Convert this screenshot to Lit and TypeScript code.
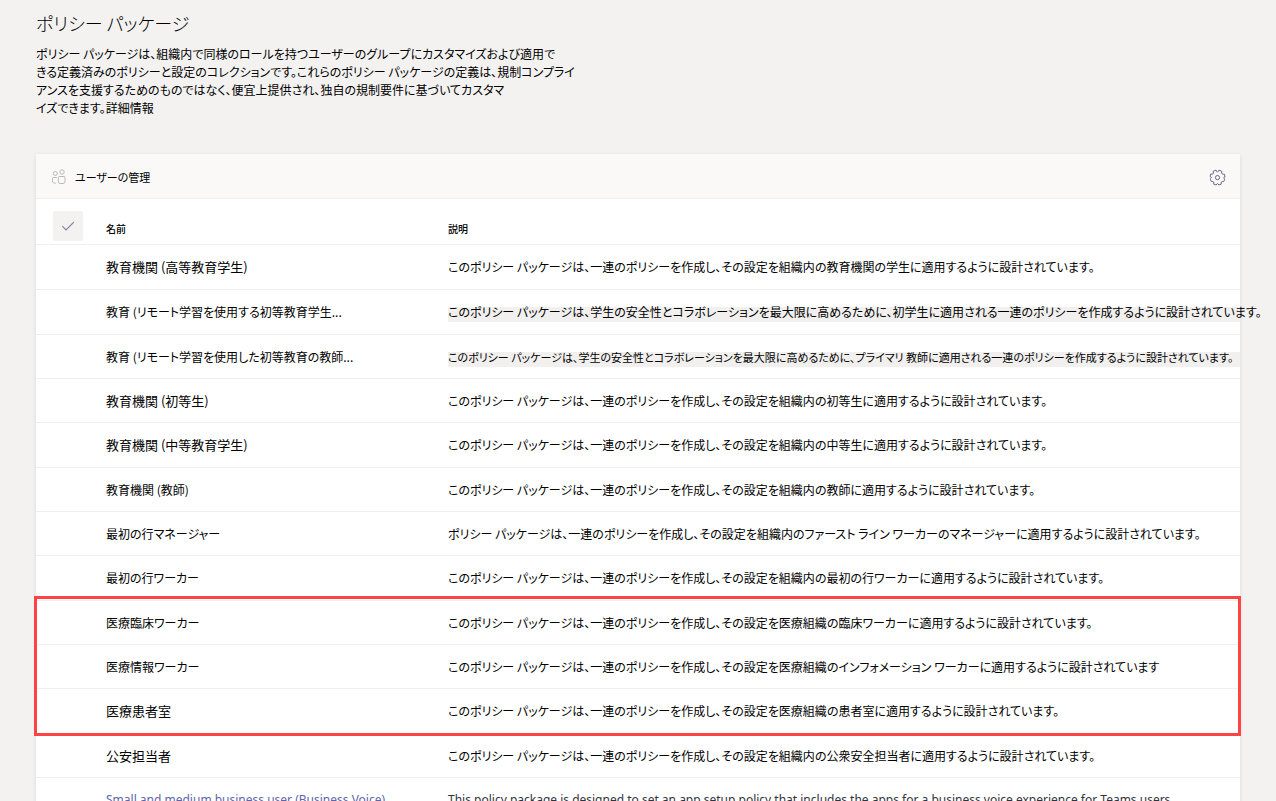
import { LitElement, html, css } from "lit";
import { customElement, state } from "lit/decorators.js";
import { classMap } from "lit/directives/class-map.js";

interface PolicyPackage {
  name: string;
  description: string;
  marked?: boolean;
  compact?: boolean;
  largeName?: boolean;
  link?: boolean;
}

const head = "このポリシー パッケージは、一連のポリシーを作成し、その設定を";
const tail = "に適用するように設計されています。";

const general: PolicyPackage[] = [
  { name: "教育機関 (高等教育学生)", description: head + "組織内の教育機関の学生" + tail, largeName: true },
  {
    name: "教育 (リモート学習を使用する初等教育学生...",
    description:
      "このポリシー パッケージは、学生の安全性とコラボレーションを最大限に高めるために、初学生に適用される一連のポリシーを作成するように設計されています。",
    marked: true,
  },
  {
    name: "教育 (リモート学習を使用した初等教育の教師...",
    description:
      "このポリシー パッケージは、学生の安全性とコラボレーションを最大限に高めるために、プライマリ 教師に適用される一連のポリシーを作成するように設計されています。",
    marked: true,
    compact: true,
  },
  { name: "教育機関 (初等生)", description: head + "組織内の初等生" + tail, largeName: true },
  { name: "教育機関 (中等教育学生)", description: head + "組織内の中等生" + tail, largeName: true },
  { name: "教育機関 (教師)", description: head + "組織内の教師" + tail },
  {
    name: "最初の行マネージャー",
    description:
      "ポリシー パッケージは、一連のポリシーを作成し、その設定を組織内のファースト ライン ワーカーのマネージャー" + tail,
  },
  { name: "最初の行ワーカー", description: head + "組織内の最初の行ワーカー" + tail },
];

const healthcare: PolicyPackage[] = [
  { name: "医療臨床ワーカー", description: head + "医療組織の臨床ワーカー" + tail },
  {
    name: "医療情報ワーカー",
    description: head + "医療組織のインフォメーション ワーカーに適用するように設計されています",
  },
  { name: "医療患者室", description: head + "医療組織の患者室" + tail, largeName: true },
];

const others: PolicyPackage[] = [
  { name: "公安担当者", description: head + "組織内の公衆安全担当者" + tail, largeName: true },
  {
    name: "Small and medium business user (Business Voice)",
    description:
      "This policy package is designed to set an app setup policy that includes the apps for a business voice experience for Teams users.",
    link: true,
  },
];

@customElement("app-root")
export class AppRoot extends LitElement {
  @state() private allSelected = false;

  static styles = css`
    :host {
      display: block;
      box-sizing: border-box;
      height: 100vh;
      overflow: hidden;
      padding: 10px 36px 0;
      background: #f3f2f1;
      color: #000;
      font-family: "Noto Sans CJK JP", "Noto Sans", sans-serif;
      font-size: 12px;
      font-feature-settings: "palt";
    }
    .title {
      margin: 0;
      font-size: 18px;
      line-height: 26px;
      font-weight: 300;
    }
    .intro {
      margin: 9px 0 0;
      line-height: 18px;
      white-space: nowrap;
    }
    .intro a {
      color: inherit;
      text-decoration: none;
    }
    .card {
      margin-top: 37px;
      background: #fff;
      border-radius: 2px 2px 0 0;
      box-shadow: 0 1px 4px rgba(0, 0, 0, 0.1);
    }
    .toolbar {
      display: flex;
      align-items: center;
      justify-content: space-between;
      height: 44px;
      padding: 0 14px 0 15px;
      background: #faf9f8;
      border-bottom: 1px solid #efeeed;
      border-radius: 2px 2px 0 0;
    }
    button {
      display: flex;
      align-items: center;
      gap: 8px;
      padding: 2px 0 0;
      border: 0;
      background: none;
      color: inherit;
      font: inherit;
      font-size: 11px;
      font-feature-settings: inherit;
    }
    .people {
      color: #bbb9b8;
    }
    .gear {
      color: #6b6a85;
    }
    svg {
      display: block;
      fill: none;
      stroke: currentColor;
    }
    table {
      width: 100%;
      table-layout: fixed;
      border-collapse: separate;
      border-spacing: 0;
    }
    .col-check {
      width: 70px;
    }
    .col-name {
      width: 342px;
    }
    th,
    td {
      box-sizing: border-box;
      height: 44px;
      padding: 0;
      border-bottom: 1px solid #f0efee;
      text-align: left;
      white-space: nowrap;
      line-height: 20px;
    }
    thead th {
      height: 46px;
      font-size: 10px;
      font-weight: 500;
      vertical-align: bottom;
      padding-bottom: 5px;
    }
    thead .check-cell {
      vertical-align: middle;
      padding: 8px 0 0 17px;
    }
    .tall td {
      height: 45px;
    }
    .check {
      position: relative;
      display: grid;
      place-items: center;
      width: 30px;
      height: 30px;
      border-radius: 2px;
      background: #f3f2f1;
      color: #8284a6;
    }
    .check input {
      position: absolute;
      inset: 0;
      width: 100%;
      height: 100%;
      margin: 0;
      opacity: 0;
    }
    .check.on {
      color: #6264a7;
    }
    .marked {
      display: block;
      background: linear-gradient(transparent 5px, #f1f0ef 5px);
    }
    .compact {
      font-size: 11px;
    }
    .large {
      font-size: 13px;
    }
    .latin {
      font-family: "Noto Sans", sans-serif;
      color: #33323a;
    }
    .latin a {
      color: #6264a7;
      text-decoration: none;
    }
    .highlight {
      position: relative;
    }
    .highlight::after {
      content: "";
      position: absolute;
      inset: -5px -1px -2px -2px;
      border: 3px solid #fd4343;
      pointer-events: none;
    }
  `;

  private row(p: PolicyPackage, index: number) {
    const tall = index === 0 || index % 3 === 1;
    return html`
      <tr class=${classMap({ tall })}>
        <td></td>
        <td class=${classMap({ latin: !!p.link, large: !!p.largeName })}>
          ${p.link ? html`<a href="#">${p.name}</a>` : p.name}
        </td>
        <td class=${classMap({ latin: !!p.link })}>
          <span class=${classMap({ marked: !!p.marked, compact: !!p.compact })}>${p.description}</span>
        </td>
      </tr>
    `;
  }

  render() {
    return html`
      <h1 class="title">ポリシー パッケージ</h1>
      <p class="intro">
        ポリシー パッケージは、組織内で同様のロールを持つユーザーのグループにカスタマイズおよび適用で<br />
        きる定義済みのポリシーと設定のコレクションです。これらのポリシー パッケージの定義は、規制コンプライ<br />
        アンスを支援するためのものではなく、便宜上提供され、独自の規制要件に基づいてカスタマ<br />
        イズできます。<a href="#">詳細情報</a>
      </p>
      <section class="card">
        <div class="toolbar">
          <button type="button">
            <svg class="people" width="16" height="16" viewBox="0 0 16 16" aria-hidden="true">
              <circle cx="4.3" cy="4.5" r="2" />
              <circle cx="11" cy="3" r="2.2" />
              <path d="M5.8 8.5H2.4Q1.4 8.5 1.4 9.5V11.8A2.4 2.4 0 0 0 4.8 14" />
              <path d="M8.3 7.5H13Q14 7.5 14 8.5V12.5Q14 14.5 12 14.5H9.3Q7.3 14.5 7.3 12.5V8.5Q7.3 7.5 8.3 7.5Z" />
            </svg>
            ユーザーの管理
          </button>
          <button type="button" class="gear" aria-label="設定">
            <svg width="17" height="17" viewBox="0 0 17 17" aria-hidden="true">
              <path
                stroke-linejoin="round"
                d="M7 1.1 7.4 2.3Q8.5 3.5 9.6 2.3L10 1.1 12.9 2.3 12.6 3.9Q12.7 5.2 14.2 5.2L15.5 5.3 16 8 14.9 8.5Q14 8.8 14.9 9.3L15.8 10.2 14.6 12.7 13.2 12.5Q12 12.7 12.2 14L12.3 15.1 9.8 16 9.2 15Q8.5 14.2 7.8 15L7.2 16 4.7 15.1 4.8 14Q5 12.7 3.8 12.5L2.4 12.7 1.2 10.2 2.1 9.3Q3 8.8 2.1 8.2L1 7.5 1.8 4.9 3.2 5.1Q4.5 5.1 4.4 3.9L4.1 2.3Z"
              />
              <circle cx="8.5" cy="8.6" r="2.1" />
            </svg>
          </button>
        </div>
        <table>
          <colgroup>
            <col class="col-check" />
            <col class="col-name" />
            <col />
          </colgroup>
          <thead>
            <tr>
              <th class="check-cell">
                <label class=${classMap({ check: true, on: this.allSelected })}>
                  <input
                    type="checkbox"
                    aria-label="すべて選択"
                    .checked=${this.allSelected}
                    @change=${() => (this.allSelected = !this.allSelected)}
                  />
                  <svg width="14" height="14" viewBox="0 0 14 14" aria-hidden="true">
                    <path d="M1.3 7.2 5 11 12.8 3.2" stroke-width="1.2" />
                  </svg>
                </label>
              </th>
              <th>名前</th>
              <th>説明</th>
            </tr>
          </thead>
          <tbody>
            ${general.map((p, i) => this.row(p, i))}
          </tbody>
          <tbody class="highlight">
            ${healthcare.map((p, i) => this.row(p, general.length + i))}
          </tbody>
          <tbody>
            ${others.map((p, i) => this.row(p, general.length + healthcare.length + i))}
          </tbody>
        </table>
      </section>
    `;
  }
}
